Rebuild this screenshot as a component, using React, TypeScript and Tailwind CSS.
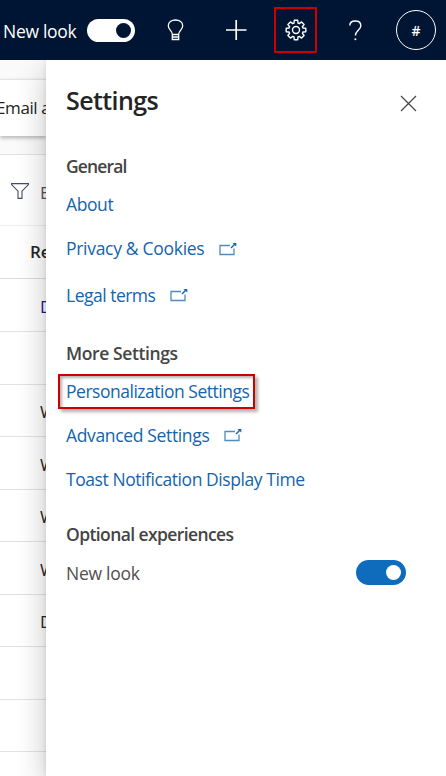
import React from "react";

function ExternalIcon({ className = "" }: { className?: string }) {
  return (
    <svg className={`shrink-0 ${className}`} width="18" height="14" viewBox="0 0 18 14" fill="none" stroke="#1464ac">
      <path d="M11 3.500H1v9h14V6.500" strokeWidth="1.300" opacity=".75" />
      <path d="M12 6 16.500 1.500" strokeWidth="1.400" />
      <path d="M13.500 1h3.800v3.500z" fill="#1464ac" stroke="none" />
    </svg>
  );
}

const link = "h-6 flex items-center text-[#1464ac]";
const heading = "h-6 flex items-center font-semibold text-[#444444]";

function Background() {
  const rows = ["", "W", "W", "W", "W", "D"];
  return (
    <div className="flex h-full w-[46px] shrink-0 flex-col overflow-hidden whitespace-nowrap bg-white text-[17px] leading-6 text-[#242424]">
      <div className="h-[19px] shrink-0 bg-[#fafafa]" />
      <div className="relative flex h-[57px] shrink-0 items-center border-t border-[#e4e4e4] bg-white shadow-[0_2px_4px_rgba(0,0,0,0.28)]">
        <span className="-ml-[4px] tracking-[-0.4px]">Email a</span>
      </div>
      <div className="h-[18px] shrink-0 bg-[#fafafa]" />
      <div className="flex h-[71px] shrink-0 items-center border-t border-[#e2e2e2] pl-[11px] pt-[6px]">
        <svg className="mb-[4px] shrink-0" width="18" height="16" viewBox="0 0 18 16" fill="none" stroke="#424e60" strokeWidth="1.1">
          <path d="M.6.6h16.8v1L11 8.2v7.2H7V8.2L.6 1.6z" />
        </svg>
        <span className="ml-[11px] text-[#555]">E</span>
      </div>
      <div className="flex h-[53px] shrink-0 items-center border-t border-[#eeeeee] pl-[30px] font-semibold">Re</div>
      <div className="flex h-[53px] shrink-0 items-center border-t border-[#dddddd] pl-[40px] pt-1 text-[#1c1c91]">D</div>
      {rows.map((text, i) => (
        <div key={i} className="flex h-[52.5px] shrink-0 items-center border-t border-[#e2e2e2] pl-[40px] pt-1">
          {text}
        </div>
      ))}
      <div className="h-[52.5px] shrink-0 border-t border-[#e2e2e2]" />
      <div className="h-[52.5px] shrink-0 border-t border-[#e2e2e2]" />
      <div className="h-[52.5px] shrink-0 border-t border-[#e2e2e2]" />
    </div>
  );
}

export default function App() {
  return (
    <div className="flex h-[776px] w-[446px] flex-col overflow-hidden bg-white font-['Open_Sans','Noto_Sans',sans-serif]">
      <header className="z-20 flex h-[60px] shrink-0 items-center bg-[#001433] text-white">
        <span className="ml-[3px] mt-px w-[84px] whitespace-nowrap text-[17.5px] leading-6 tracking-[-0.3px]">New look</span>
        <div className="mt-px flex h-[23px] w-12 items-center justify-end rounded-full bg-white pr-[4px]">
          <div className="h-[15px] w-[15px] rounded-full bg-[#001433]" />
        </div>
        <svg className="ml-[32px] shrink-0" width="17" height="22" viewBox="0 0 17 22" fill="none" stroke="white" strokeWidth="1.3">
          <path d="M5.3 15.5c0-4-4-4.800-4-8.800C1.300 3.200 4.500 1 8.500 1s7.200 2.200 7.200 5.700c0 4-4 4.800-4 8.800zM5.300 15.500v5h6.400v-5M5.300 18h6.400" />
        </svg>
        <svg className="ml-[42px] shrink-0" width="21" height="20" viewBox="0 0 21 20" stroke="white" strokeWidth="1.7">
          <path d="M10.200 0v20M0 10h20.500" />
        </svg>
        <div className="ml-[27px] flex h-[46px] w-[43px] shrink-0 items-center justify-center border-2 border-[#cc0000]">
          <svg className="ml-px" width="22" height="22" viewBox="0 0 22 22" fill="none" stroke="white" strokeWidth="1.400" strokeLinejoin="round">
            <path d="M9.300 1.200 9 4.100 7.700 4.600 5.500 2.900 2.900 5.500 4.600 7.700 4.100 9 1.200 9.300v3.400l2.900.3.500 1.300-1.700 2.200 2.600 2.600 2.200-1.700 1.300.5.3 2.900h3.400l.3-2.900 1.300-.5 2.200 1.700 2.600-2.600-1.700-2.200.5-1.300 2.900-.3V9.300L17.900 9l-.5-1.300 1.700-2.200-2.600-2.600-2.200 1.700L13 4.100l-.3-2.900z" />
            <circle cx="11" cy="11" r="3.500" />
          </svg>
        </div>
        <svg className="ml-[32px] shrink-0" width="13" height="21" viewBox="0 0 13 21" fill="none" stroke="white" strokeWidth="1.400">
          <path d="M.8 5.500C.8 2.700 3 1 6.300 1s5.500 1.800 5.500 4.700c0 4.300-5.400 4.800-5.400 9.800" />
          <circle cx="6.400" cy="19.300" r="1" fill="white" stroke="none" />
        </svg>
        <div className="ml-[34px] flex h-10 w-10 shrink-0 items-center justify-center rounded-full border border-white text-[14px] font-semibold">
          #
        </div>
      </header>
      <div className="flex min-h-0 flex-1">
        <Background />
        <main className="z-10 flex min-w-0 flex-1 flex-col whitespace-nowrap bg-white pl-5 text-[17.5px] leading-6 tracking-[-0.4px] shadow-[0_10px_28px_rgba(0,0,0,0.24),0_0_4px_rgba(0,0,0,0.1)]">
          <div className="mt-[24px] flex h-8 items-center justify-between">
            <h1 className="text-[25px] font-semibold leading-8 tracking-[-0.6px] text-[#242424]">Settings</h1>
            <svg className="mr-[29px] mt-[6px]" width="17" height="17" viewBox="0 0 17 17" stroke="#444" strokeWidth="1.200">
              <path d="m1 1 15 15M16 1 1 16" />
            </svg>
          </div>
          <h2 className={`mt-[38px] tracking-[-0.85px] ${heading}`}><span>General</span></h2>
          <a className={`mt-[14px] ${link}`}><span>About</span></a>
          <a className={`mt-[20px] tracking-[-0.3px] ${link}`}><span>Privacy &amp; Cookies</span><ExternalIcon className="ml-[15px] mt-[2px]" /></a>
          <a className={`mt-[23px] tracking-[-0.5px] ${link}`}><span>Legal terms</span><ExternalIcon className="ml-[15px]" /></a>
          <h2 className={`mt-[34px] ${heading}`}><span>More Settings</span></h2>
          <a className="-ml-2 mt-[9px] flex h-[35px] w-[197px] items-center border-2 border-[#cc0000] pb-px pl-[6px] tracking-[-0.48px] text-[#1464ac] shadow-[3px_3px_3px_rgba(0,0,0,0.3),inset_2px_2px_3px_rgba(0,0,0,0.3)]">
            <span>Personalization Settings</span>
          </a>
          <a className={`mt-[14px] tracking-[-0.35px] ${link}`}><span>Advanced Settings</span><ExternalIcon className="ml-[15px]" /></a>
          <a className={`mt-[20px] tracking-[-0.43px] ${link}`}><span>Toast Notification Display Time</span></a>
          <h2 className={`mt-[31px] tracking-[-0.6px] ${heading}`}><span>Optional experiences</span></h2>
          <div className="mt-[15px] flex h-6 items-center justify-between pr-10 tracking-[-0.25px] text-[#505050]">
            <span>New look</span>
            <div className="-mt-px flex h-[25px] w-[50px] items-center justify-end rounded-full bg-[#0f6cbd] pr-[5px]">
              <div className="h-[15px] w-[15px] rounded-full bg-white" />
            </div>
          </div>
        </main>
      </div>
    </div>
  );
}
